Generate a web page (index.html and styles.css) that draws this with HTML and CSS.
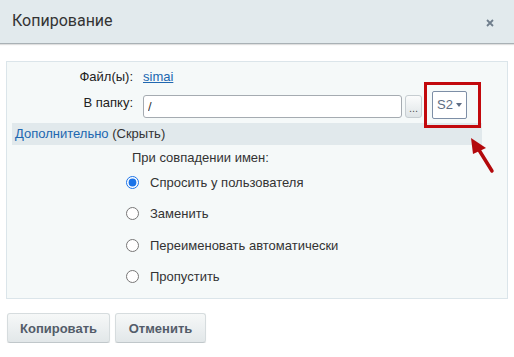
FILE: index.html
```html
<!DOCTYPE html>
<html lang="ru">

<head>
    <meta charset="UTF-8">
    <meta name="viewport" content="width=device-width, initial-scale=1.0">
    <title>Копирование</title>

    <link rel="stylesheet" href="styles.css">

</head>

<body>
    <div class="dialog">
        <div class="head">
            <span class="title">Копирование</span>
            <svg class="close" width="8" height="8" viewBox="0 0 8 8">
                <path d="M1 1L7 7M7 1L1 7" stroke="#6f7e8c" stroke-width="1.8" />
            </svg>
        </div>

        <div class="panel">
            <div class="form">
                <div class="row first">
                    <span class="label">Файл(ы):</span>
                    <a class="link" href="#">simai</a>
                </div>
                <div class="row second">
                    <span class="label">В папку:</span>
                    <div class="path">
                        <input class="field" type="text" value="/">
                        <button class="dots">...</button>
                        <div class="site">S2 <span class="caret"></span></div>
                    </div>
                </div>
                <div class="bar"><a href="#">Дополнительно</a> (Скрыть)</div>
                <div class="options">
                    <div class="caption">При совпадении имен:</div>
                    <label class="opt"><input type="radio" name="mode" checked> Спросить у пользователя</label>
                    <label class="opt"><input type="radio" name="mode"> Заменить</label>
                    <label class="opt"><input type="radio" name="mode"> Переименовать автоматически</label>
                    <label class="opt"><input type="radio" name="mode"> Пропустить</label>
                </div>
            </div>

            <!-- annotation over the site selector -->
            <div class="mark"></div>
            <svg class="arrow" width="30" height="40" viewBox="0 0 30 40">
                <path d="M24 35L11 14" stroke="#b3090c" stroke-width="3.5" stroke-linecap="round" />
                <polygon points="3,2 18,12 5,18" fill="#b3090c" />
            </svg>
        </div>

        <div class="buttons">
            <button class="btn">Копировать</button>
            <button class="btn">Отменить</button>
        </div>
    </div>
</body>

</html>
```

FILE: styles.css
```css
body {
    margin: 0;
    font-family: "Liberation Sans", Arial, sans-serif;
    font-size: 13px;
    color: #333;
    background: #fff;
}

.head {
    height: 43px;
    background-color: #e2eaed;
    border-bottom: 1px solid #a9b1b5;
    box-shadow: 0 1px 1px rgba(0, 0, 0, 0.12);
    display: flex;
    align-items: center;
    justify-content: space-between;
    padding: 0 20px 0 12px;
}

.title {
    font-family: Roboto, "Liberation Sans", sans-serif;
    font-size: 16px;
    color: #333;
    margin-top: -2px;
}

.close {
    margin-top: 3px;
}

.panel {
    position: relative;
    margin: 17px 6px 0 6px;
    height: 236px;
    background-color: #f5f9f9;
    border: 1px solid #dbe5ea;
    padding: 0 5px;
}

.form {
    width: 470px;
}

.row {
    display: flex;
    align-items: center;
}

.row.first {
    margin-top: 5px;
    height: 18px;
}

.row.second {
    margin-top: 6px;
    height: 27px;
}

.label {
    width: 121px;
    padding-right: 10px;
    text-align: right;
    color: #222;
}

.row.second .label {
    margin-top: -5px;
}

.link {
    color: #2067b0;
    text-decoration: underline;
}

.path {
    display: flex;
    align-items: center;
}

.field {
    box-sizing: border-box;
    width: 259px;
    height: 23px;
    margin: 3px 0 0 0;
    padding: 0 4px;
    border: 1px solid #a5abb1;
    border-radius: 3px;
    font-family: "Liberation Sans", Arial, sans-serif;
    font-size: 13px;
    color: #333;
    background: #fff;
}

.dots {
    box-sizing: border-box;
    width: 17px;
    height: 23px;
    margin: 3px 0 0 3px;
    padding: 4px 0 0 0;
    border: 1px solid #c6cdd1;
    border-radius: 3px;
    background: linear-gradient(#fbfcfc, #dfe5e7);
    font-size: 11px;
    line-height: 14px;
    color: #555;
}

.site {
    box-sizing: border-box;
    width: 35px;
    height: 28px;
    margin-left: 10px;
    border: 1px solid #7d8ea6;
    border-radius: 2px;
    background: #fff;
    color: #5e6d84;
    font-size: 13px;
    display: flex;
    align-items: center;
    justify-content: center;
    gap: 3px;
}

.caret {
    width: 0;
    height: 0;
    border-left: 3px solid transparent;
    border-right: 3px solid transparent;
    border-top: 4px solid #5e6d84;
}

.bar {
    margin-top: 5px;
    height: 22px;
    line-height: 22px;
    background-color: #e1e9ec;
    padding-left: 3px;
    color: #333;
}

.bar a {
    color: #2067b0;
    text-decoration: none;
}

.options {
    padding-left: 114px;
}

.caption {
    margin-top: 4px;
    height: 18px;
    line-height: 18px;
    padding-left: 6px;
}

.opt {
    display: flex;
    align-items: center;
    height: 31.3px;
    gap: 11px;
}

.opt input {
    margin: 0;
    width: 13px;
    height: 13px;
    accent-color: #1a73e8;
}

.mark {
    position: absolute;
    left: 417px;
    top: 20px;
    width: 51px;
    height: 40px;
    border: 3px solid #c2090d;
}

.arrow {
    position: absolute;
    left: 461px;
    top: 74px;
}

.buttons {
    display: flex;
    gap: 5px;
    margin: 14px 0 0 7px;
}

.btn {
    height: 30px;
    padding: 0 12px;
    border: 1px solid #d6dcde;
    border-bottom-color: #c0c7ca;
    border-radius: 3px;
    background: linear-gradient(#f6f8f8, #e2e7e9);
    box-shadow: 0 1px 1px rgba(0, 0, 0, 0.1);
    font-family: "Liberation Sans", Arial, sans-serif;
    font-size: 13px;
    font-weight: bold;
    color: #535c69;
}

.btn:first-child {
    width: 103px;
}

.btn:last-child {
    width: 91px;
}
```
